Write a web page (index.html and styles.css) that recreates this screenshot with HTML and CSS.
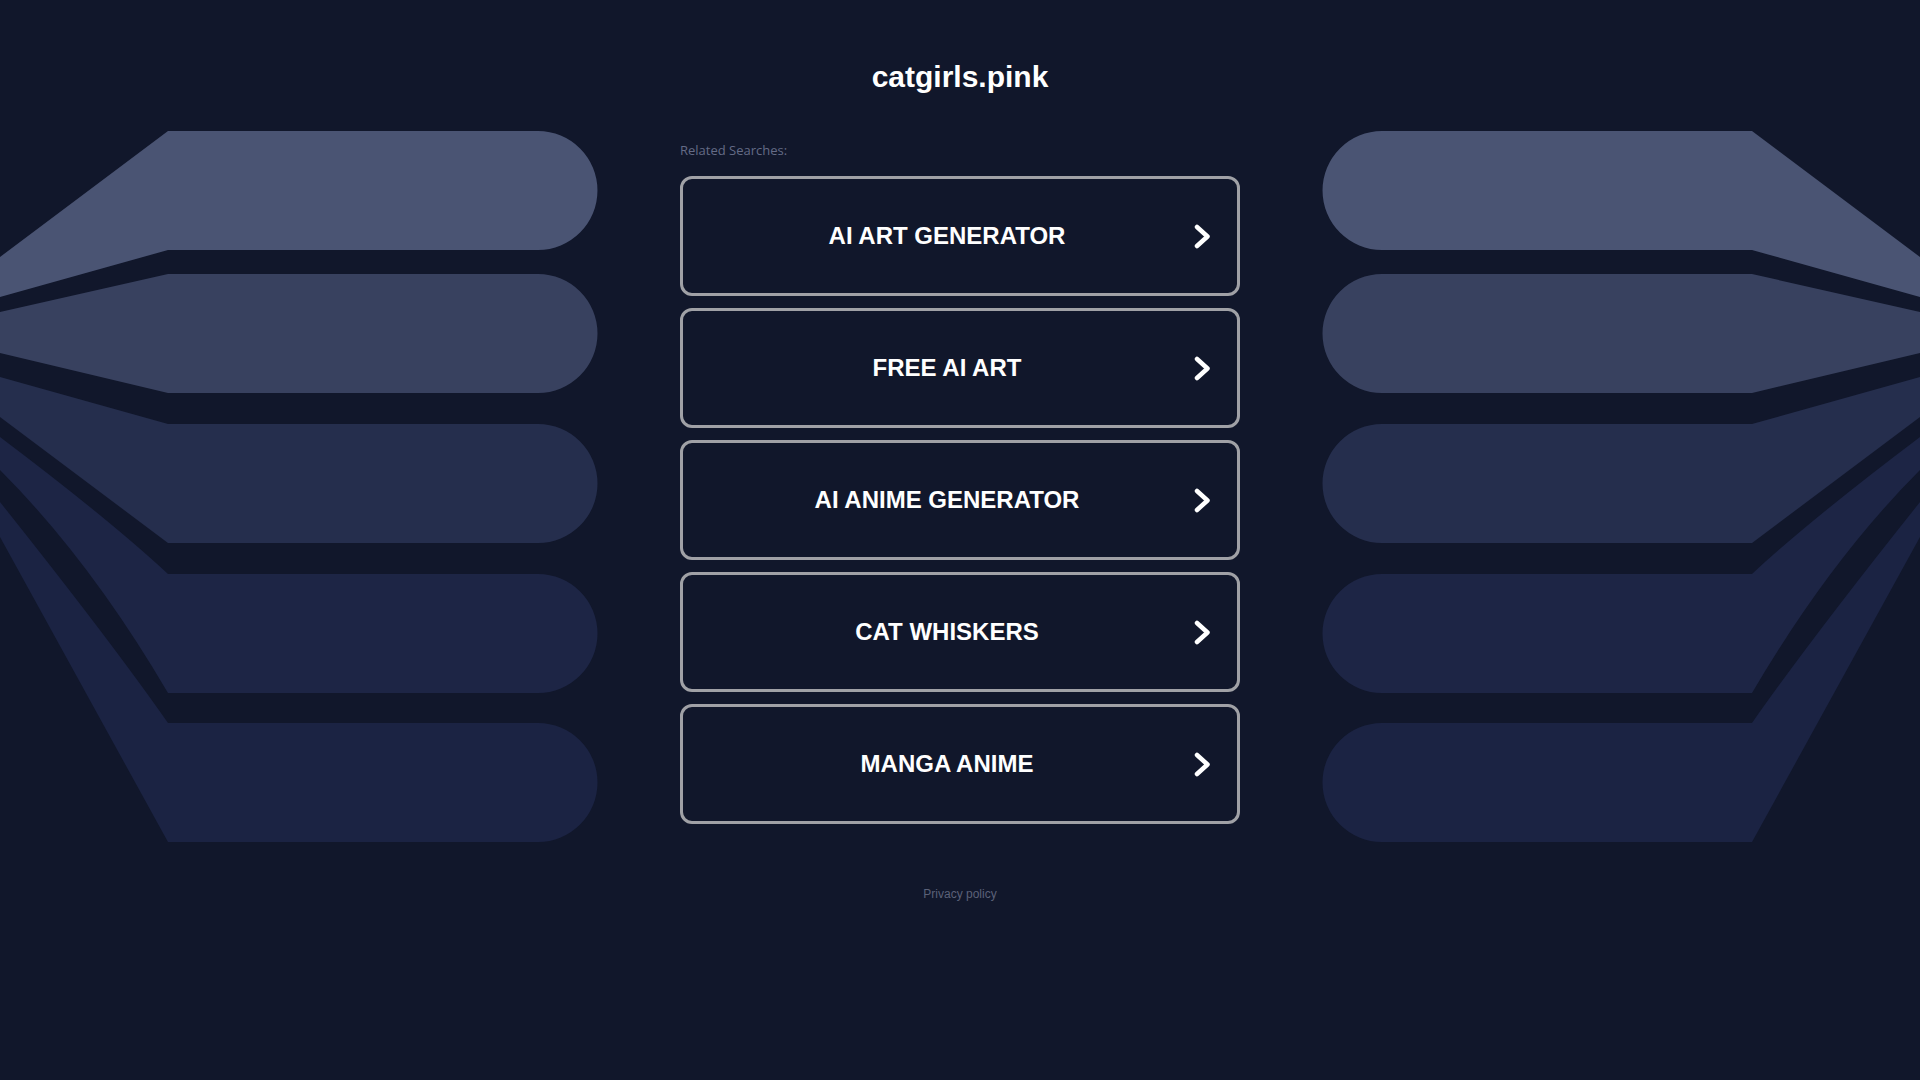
FILE: index.html
```html
<!DOCTYPE html>
<html lang="en">
  <head>
    <meta charset="utf-8">
    <title>catgirls.pink</title>
    <link rel="stylesheet" href="styles.css">
  </head>
  <body>
    <!-- decorative fan of pills on both sides -->
    <svg class="backdrop" width="1920" height="1080" viewBox="0 0 1920 1080" aria-hidden="true">
      <defs>
        <g id="fan">
          <path fill="#4a5473" d="M0 257 L168 131 H538 A59.5 59.5 0 0 1 538 250 H168 L0 297 Z"/>
          <path fill="#38415f" d="M0 312 L168 274 H538 A59.5 59.5 0 0 1 538 393 H168 L0 353 Z"/>
          <path fill="#252e4d" d="M0 377 L168 424 H538 A59.5 59.5 0 0 1 538 543 H168 L0 417 Z"/>
          <path fill="#1d2545" d="M0 437 Q110 520 168 574 H538 A59.5 59.5 0 0 1 538 693 H168 Q90 560 0 470 Z"/>
          <path fill="#1b2343" d="M0 502 Q110 640 168 723 H538 A59.5 59.5 0 0 1 538 842 H168 L0 537 Z"/>
        </g>
      </defs>
      <use href="#fan"/>
      <use href="#fan" transform="translate(1920 0) scale(-1 1)"/>
    </svg>

    <div class="page">
      <h1 class="domain">catgirls.pink</h1>
      <div class="related">Related Searches:</div>

      <div class="links">
        <a class="link" href="#">
          <span class="link-text">AI ART GENERATOR</span>
          <svg class="chevron" width="17" height="25" viewBox="0 0 17 25"><path d="M3 3 L13.5 12.5 L3 22"/></svg>
        </a>
        <a class="link" href="#">
          <span class="link-text">FREE AI ART</span>
          <svg class="chevron" width="17" height="25" viewBox="0 0 17 25"><path d="M3 3 L13.5 12.5 L3 22"/></svg>
        </a>
        <a class="link" href="#">
          <span class="link-text">AI ANIME GENERATOR</span>
          <svg class="chevron" width="17" height="25" viewBox="0 0 17 25"><path d="M3 3 L13.5 12.5 L3 22"/></svg>
        </a>
        <a class="link" href="#">
          <span class="link-text">CAT WHISKERS</span>
          <svg class="chevron" width="17" height="25" viewBox="0 0 17 25"><path d="M3 3 L13.5 12.5 L3 22"/></svg>
        </a>
        <a class="link" href="#">
          <span class="link-text">MANGA ANIME</span>
          <svg class="chevron" width="17" height="25" viewBox="0 0 17 25"><path d="M3 3 L13.5 12.5 L3 22"/></svg>
        </a>
      </div>

      <div class="footer"><a href="#">Privacy policy</a></div>
    </div>
  </body>
</html>
```

FILE: styles.css
```css
html, body { margin: 0; padding: 0; }
body { background: #11172b; font-family: "Liberation Sans", Arial, sans-serif; color: #fff; min-height: 1080px; overflow: hidden; }

.backdrop { position: absolute; top: 0; left: 0; z-index: 0; }

.page { position: relative; z-index: 1; width: 560px; margin: 0 auto; padding-top: 59px; }
.domain { margin: 0; font-size: 30px; line-height: 36px; font-weight: bold; text-align: center; color: #fff; }
.related { margin-top: 47px; font-family: "Open Sans", sans-serif; font-size: 13px; line-height: 16px; color: #646b86; }

.links { margin-top: 18px; }
.link { display: flex; align-items: center; box-sizing: border-box; height: 120px; margin-bottom: 12px; padding: 0 26px 0 17px; border: 3px solid #a0a1a6; border-radius: 12px; background: #11172b; color: #fff; text-decoration: none; }
.link-text { flex: 1; text-align: center; font-size: 24px; font-weight: bold; }
.chevron { flex: none; }
.chevron path { fill: none; stroke: #fff; stroke-width: 4.5; stroke-linecap: round; stroke-linejoin: round; }

.footer { margin-top: 62px; text-align: center; font-size: 12px; line-height: 16px; }
.footer a { color: #5b6178; text-decoration: none; }
```
